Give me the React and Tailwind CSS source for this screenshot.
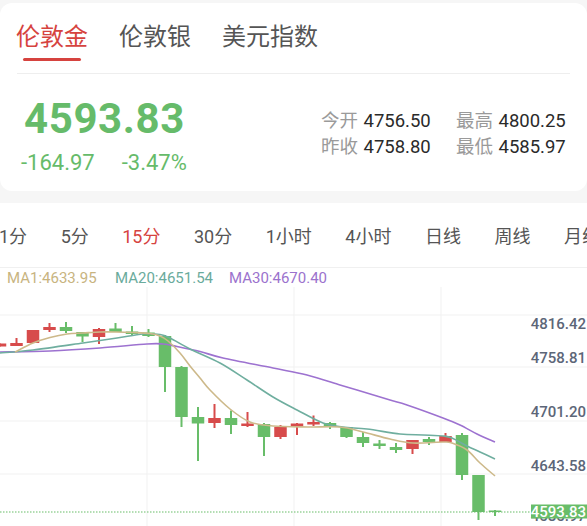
import React from "react";

const RED = "#d74b4b";
const GREEN = "#68bd69";

// [color, bodyTop, bodyBottom, wickTop, wickBottom]
const candles = [
  ["r", 343.5, 346.5, 343.5, 346.5],
  ["r", 343, 346, 338, 346],
  ["r", 330, 343, 330, 343],
  ["r", 327, 330, 323, 332],
  ["g", 327, 331, 322, 333],
  ["g", 332, 336.5, 332, 342],
  ["r", 329, 337, 328, 344],
  ["g", 328.5, 332, 323, 332],
  ["g", 331.5, 334, 326, 336],
  ["g", 332.5, 336, 329, 337],
  ["g", 336, 367, 335, 392],
  ["g", 367, 417, 366, 427],
  ["g", 417, 423.5, 407, 461],
  ["r", 418, 423, 404, 428],
  ["g", 418, 425, 410.5, 434],
  ["r", 423.5, 426, 412, 427],
  ["g", 424, 437, 423, 456],
  ["r", 427, 437, 425, 439],
  ["r", 423.5, 426.5, 423, 435],
  ["r", 422, 424.5, 415.5, 426],
  ["g", 423, 427, 422, 429],
  ["g", 427, 437, 427, 438],
  ["g", 437, 443, 432, 447],
  ["g", 443.5, 446, 440, 449],
  ["g", 447, 450, 443, 453],
  ["r", 440, 449, 440, 454],
  ["g", 439, 442, 437, 445],
  ["r", 436, 442, 433, 442],
  ["g", 435, 475, 433, 480],
  ["g", 475, 512, 475, 520],
  ["g", 510.5, 512, 510, 516],
];

const ma1 = [
  [15, 352], [33, 343], [50, 337.5], [67, 334], [83, 333], [100, 332], [116, 332],
  [133, 332.5], [150, 333.5], [160, 336], [168, 341], [180, 353], [190, 366],
  [200, 378], [210, 390], [230, 409], [250, 422], [273, 426], [307, 427],
  [340, 427], [363, 432], [390, 439], [413, 443], [443, 442], [452, 443],
  [467, 450], [480, 463], [495, 476],
];
const ma20 = [
  [0, 353], [33, 350], [83, 343], [117, 338], [143, 334], [160, 334.5], [170, 338],
  [190, 349], [220, 363], [247, 380], [273, 397], [297, 410], [323, 423],
  [343, 427], [367, 429], [400, 434], [423, 435], [443, 436], [452, 438],
  [467, 446], [480, 452], [495, 459],
];
const ma30 = [
  [0, 352], [50, 351], [100, 348], [147, 344], [163, 344], [177, 346.5],
  [200, 351.5], [223, 358], [273, 368], [307, 375], [340, 385], [357, 390],
  [390, 400], [407, 405], [443, 418], [460, 425], [477, 434], [495, 442],
];

function smooth(pts) {
  let d = `M${pts[0][0]},${pts[0][1]}`;
  for (let i = 0; i < pts.length - 1; i++) {
    const p0 = pts[i - 1] || pts[i];
    const p1 = pts[i];
    const p2 = pts[i + 1];
    const p3 = pts[i + 2] || p2;
    const c1x = p1[0] + (p2[0] - p0[0]) / 6;
    const c1y = p1[1] + (p2[1] - p0[1]) / 6;
    const c2x = p2[0] - (p3[0] - p1[0]) / 6;
    const c2y = p2[1] - (p3[1] - p1[1]) / 6;
    d += ` C${c1x},${c1y} ${c2x},${c2y} ${p2[0]},${p2[1]}`;
  }
  return d;
}

function Chart() {
  const labels = [
    ["4816.42", 329],
    ["4758.81", 363],
    ["4701.20", 417],
    ["4643.58", 471],
  ];
  return (
    <svg
      className="absolute inset-0"
      width="587"
      height="258"
      viewBox="0 268 587 258"
    >
      {[315, 367, 421, 474].map((y) => (
        <line key={y} x1="0" x2="587" y1={y} y2={y} stroke="#f1f1f1" strokeWidth="1" />
      ))}
      {[147, 294, 441].map((x) => (
        <line key={x} x1={x} x2={x} y1="287" y2="526" stroke="#f1f1f1" strokeWidth="1" />
      ))}
      {candles.map((c, i) => {
        const cx = 16.5 * i;
        const col = c[0] === "r" ? RED : GREEN;
        return (
          <g key={i}>
            <line x1={cx} x2={cx} y1={c[3]} y2={c[4]} stroke={col} strokeWidth="2" />
            <rect x={cx - 6.25} y={c[1]} width="12.5" height={Math.max(c[2] - c[1], 1.5)} fill={col} />
          </g>
        );
      })}
      <path d={smooth(ma30)} fill="none" stroke="#9d72d0" strokeWidth="1.6" />
      <path d={smooth(ma20)} fill="none" stroke="#6fae9f" strokeWidth="1.6" />
      <path d={smooth(ma1)} fill="none" stroke="#cdb98a" strokeWidth="1.6" />
      <line x1="0" x2="531" y1="512" y2="512" stroke={GREEN} strokeWidth="1.2" strokeDasharray="1.5 1.5" />
      {labels.map(([t, y]) => (
        <text key={t} x="586" y={y} textAnchor="end" fontSize="15" fill="#5c6678" fontFamily="Roboto, sans-serif" fontWeight="500">
          {t}
        </text>
      ))}
      <text x="586" y="521" textAnchor="end" fontSize="15" fill="#5c6678" fontFamily="Roboto, sans-serif" fontWeight="500">
        4585.97
      </text>
      <rect x="531" y="504.5" width="56" height="14" fill={GREEN} />
      <text x="586" y="516.8" textAnchor="end" fontSize="15" fill="#ffffff" fontFamily="Roboto, sans-serif" fontWeight="500">
        4593.83
      </text>
    </svg>
  );
}

export default function App() {
  const periods = ["1分", "5分", "15分", "30分", "1小时", "4小时", "日线", "周线", "月线"];
  return (
    <div className="w-[587px] h-[526px] overflow-hidden bg-[#f6f6f6] pt-[3px] font-[Roboto,'Noto_Sans_CJK_SC',sans-serif]">
      <div className="bg-white rounded-[12px] h-[188px]">
        <div className="flex items-start gap-[31px] pl-[16px] pt-[22px]">
          <div className="flex flex-col items-center">
            <span className="text-[24px] leading-[24px] text-[#d6433f] whitespace-nowrap">伦敦金</span>
            <span className="mt-[9px] w-[58px] h-[3px] rounded-full bg-[#d6433f]" />
          </div>
          <span className="text-[24px] leading-[24px] text-[#555555] whitespace-nowrap">伦敦银</span>
          <span className="text-[24px] leading-[24px] text-[#555555] whitespace-nowrap">美元指数</span>
        </div>
        <div className="mt-[12px] mx-[17px] h-px bg-[#eeeeee]" />
        <div className="flex">
          <div className="w-[297px] shrink-0 pl-[24px] pt-[24px]">
            <div className="text-[42px] leading-none font-bold text-[#66bb6a] tracking-[0.6px]">4593.83</div>
            <div className="mt-[11.5px] flex gap-[27px] text-[22px] leading-none text-[#66bb6a]">
              <span className="-ml-[3px]">-164.97</span>
              <span>-3.47%</span>
            </div>
          </div>
          <div className="pl-[24px] pt-[34px] text-[18.5px] leading-[26px] whitespace-nowrap">
            <div className="flex">
              <span className="w-[37px] shrink-0 text-[#9a9a9a]">今开</span>
              <span className="ml-[5.5px] w-[92.5px] shrink-0 text-[#2a2a2a]">4756.50</span>
              <span className="w-[37px] shrink-0 text-[#9a9a9a]">最高</span>
              <span className="ml-[5.5px] text-[#2a2a2a]">4800.25</span>
            </div>
            <div className="flex">
              <span className="w-[37px] shrink-0 text-[#9a9a9a]">昨收</span>
              <span className="ml-[5.5px] w-[92.5px] shrink-0 text-[#2a2a2a]">4758.80</span>
              <span className="w-[37px] shrink-0 text-[#9a9a9a]">最低</span>
              <span className="ml-[5.5px] text-[#2a2a2a]">4585.97</span>
            </div>
          </div>
        </div>
      </div>
      <div className="mt-[12px] bg-white h-[65px] border-b border-[#f0f0f0] overflow-hidden">
        <div className="flex gap-[33.5px] pt-[25px] -ml-[1px] whitespace-nowrap">
          {periods.map((p) => (
            <span
              key={p}
              className={
                p === "15分"
                  ? "shrink-0 text-[18px] leading-none text-[#d6433f]"
                  : "shrink-0 text-[18px] leading-none text-[#555555]"
              }
            >
              {p}
            </span>
          ))}
        </div>
      </div>
      <div className="relative h-[258px] bg-white">
        <Chart />
        <div className="absolute left-[7px] top-[2.5px] flex text-[15px] leading-none whitespace-nowrap">
          <span className="w-[108px] text-[#c8b47f]">MA1:4633.95</span>
          <span className="w-[114px] text-[#6aab9c]">MA20:4651.54</span>
          <span className="text-[#9b72cd]">MA30:4670.40</span>
        </div>
      </div>
    </div>
  );
}
